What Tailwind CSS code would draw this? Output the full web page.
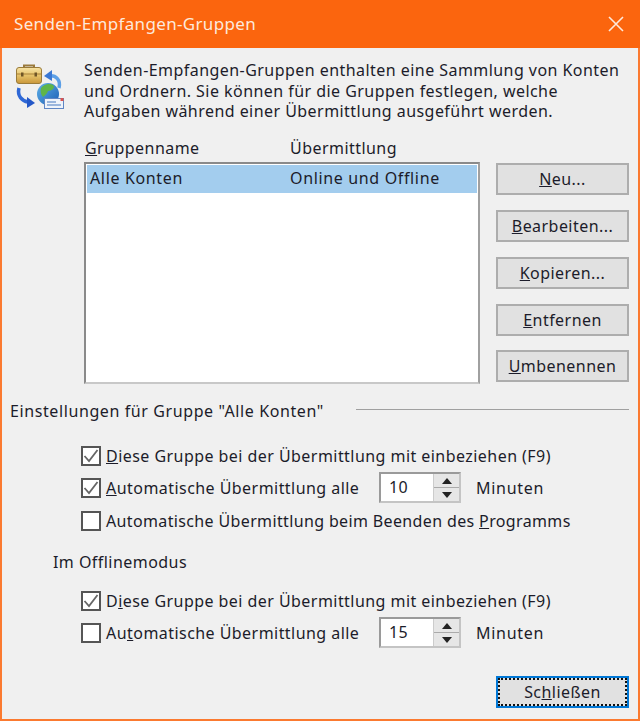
<!DOCTYPE html>
<html lang="de">
<head>
  <meta charset="UTF-8" />
  <script src="https://cdn.jsdelivr.net/npm/@tailwindcss/browser@4"></script>
  <title>Senden-Empfangen-Gruppen</title>
</head>
<body class="bg-[#f0f0f0] font-['Noto_Sans',sans-serif] text-[16px] leading-5 tracking-[0.45px] text-[#1c1c2a] overflow-hidden">
  <div class="w-[640px] h-[721px] flex flex-col border-x-2 border-b-2 border-[#fb7a30]">
    <!-- title bar -->
    <header class="h-12 -mx-0.5 shrink-0 bg-[#fb650e] flex items-center justify-between pl-[14px] pr-[16px] text-[#fde9dc] text-[17px] tracking-[0.33px]">
      <span>Senden-Empfangen-Gruppen</span>
      <svg class="w-4 h-4" viewBox="0 0 16 16" fill="none" stroke="#fde9dc" stroke-width="1.6"><path d="M1 1l14 14M15 1L1 15" /></svg>
    </header>

    <main class="flex-1 flex flex-col pl-[8px] pr-[9px]">
      <!-- intro -->
      <section class="flex mt-[12px] pl-[5px]">
        <svg class="w-[50px] h-[50px] mt-[1px] shrink-0" viewBox="0 0 50 50">
          <defs>
            <linearGradient id="gold" x1="0" y1="0" x2="0" y2="1">
              <stop offset="0" stop-color="#f6e3a6" />
              <stop offset="0.45" stop-color="#e8c66e" />
              <stop offset="1" stop-color="#c9963a" />
            </linearGradient>
            <linearGradient id="sea" x1="0" y1="0" x2="1" y2="1">
              <stop offset="0" stop-color="#5fb0e8" />
              <stop offset="1" stop-color="#1c5fb5" />
            </linearGradient>
          </defs>
          <!-- arrows -->
          <path d="M44 27c2-8-3-13-10-12" fill="none" stroke="#5c9fe6" stroke-width="3.500" />
          <path d="M29 15l8-6v11z" fill="#3a78d4" />
          <path d="M4 27c-2 8 3 13 9 14" fill="none" stroke="#2f68d6" stroke-width="3.500" />
          <path d="M20 42l-8-6v11z" fill="#2458c8" />
          <!-- briefcase -->
          <path d="M9 7V4.500h10V7" fill="none" stroke="#9a7a3c" stroke-width="2" />
          <rect x="1.500" y="6.500" width="25" height="16" rx="2.500" fill="url(#gold)" stroke="#9a7b3a" />
          <path d="M2 13h24" stroke="#a9823a" />
          <rect x="6" y="11.500" width="2.500" height="4" fill="#6e5526" />
          <rect x="19.500" y="11.500" width="2.500" height="4" fill="#6e5526" />
          <!-- globe -->
          <circle cx="33" cy="33" r="11" fill="url(#sea)" />
          <path d="M26 27c3-4 9-5 12-3 3 3-2 6-5 6-1 3-3 4-5 6-2-2-3-6-2-9z" fill="#5fb548" />
          <!-- envelope -->
          <rect x="29.500" y="37.500" width="19" height="10" fill="#eef3fa" stroke="#5f86c4" />
          <path d="M32 41h9M32 44h14" stroke="#7ea1d4" stroke-width="1.500" />
          <rect x="45.500" y="37" width="3" height="3" fill="#d9534f" />
        </svg>
        <p class="ml-[19px] leading-[20.5px] whitespace-nowrap">Senden-Empfangen-Gruppen enthalten eine Sammlung von Konten<br />und Ordnern. Sie können für die Gruppen festlegen, welche<br />Aufgaben während einer Übermittlung ausgeführt werden.</p>
      </section>

      <!-- list + buttons -->
      <section class="flex mt-[16px] pl-[74px]">
        <div class="w-[396px] shrink-0">
          <div class="flex h-5 pl-px">
            <span class="w-[205px]"><u>G</u>ruppenname</span>
            <span>Übermittlung</span>
          </div>
          <div class="h-[222px] mt-[4px] bg-white border-2 border-[#8a8a8a] border-r-[#a0a0a0] border-b-[#c8c8c8] p-px">
            <div class="h-7 bg-[#a3cdee] flex items-center pl-[3px] pb-px tracking-[0.65px]">
              <span class="w-[200px]">Alle Konten</span>
              <span>Online und Offline</span>
            </div>
          </div>
        </div>
        <div class="ml-4 mt-[25px] w-[133px] flex flex-col gap-[15px]">
          <button class="h-[32px] bg-[#e1e1e1] border-2 border-[#adadad]"><u>N</u>eu...</button>
          <button class="h-[32px] bg-[#e1e1e1] border-2 border-[#adadad]"><u>B</u>earbeiten...</button>
          <button class="h-[32px] bg-[#e1e1e1] border-2 border-[#adadad]"><u>K</u>opieren...</button>
          <button class="h-[32px] bg-[#e1e1e1] border-2 border-[#adadad]"><u>E</u>ntfernen</button>
          <button class="h-[32px] -mt-px bg-[#e1e1e1] border-2 border-[#adadad]"><u>U</u>mbenennen</button>
        </div>
      </section>

      <!-- group settings -->
      <section class="flex items-center mt-[17px] h-5">
        <span class="tracking-[0.6px]">Einstellungen für Gruppe "Alle Konten"</span>
        <div class="flex-1 h-px ml-[32px] mb-[2px] bg-[#a0a0a0]"></div>
      </section>

      <section class="flex flex-col mt-[25px] pl-[71px]">
        <label class="flex items-center h-5 gap-[5px]">
          <span class="w-5 h-5 bg-white border-2 border-[#555] flex items-center justify-center"><svg class="w-4 h-4" viewBox="0 0 16 16" fill="none" stroke="#666" stroke-width="1.800"><path d="M1.500 8l4.500 5L14.500 2" /></svg></span>
          <span><u>D</u>iese Gruppe bei der Übermittlung mit einbeziehen (F9)</span>
        </label>
        <label class="flex items-center h-5 gap-[5px] mt-[12px]">
          <span class="w-5 h-5 bg-white border-2 border-[#555] flex items-center justify-center"><svg class="w-4 h-4" viewBox="0 0 16 16" fill="none" stroke="#666" stroke-width="1.800"><path d="M1.500 8l4.500 5L14.500 2" /></svg></span>
          <span class="w-[268px] whitespace-nowrap"><u>A</u>utomatische Übermittlung alle</span>
          <div class="w-[82px] h-[31px] flex border-2 border-[#9a9a9a] border-r-[#c4c4c4] border-b-[#c4c4c4] bg-white">
            <span class="flex-1 pl-[8px] leading-[27px]">10</span>
            <div class="w-[26px] flex flex-col bg-[#e6e6e6] border-l border-[#ccc]">
              <span class="flex-1 flex items-center justify-center border-b border-[#aaa]"><svg class="w-3 h-2" viewBox="0 0 12 8"><path d="M6 1l5 6H1z" fill="#222" /></svg></span>
              <span class="flex-1 flex items-center justify-center"><svg class="w-3 h-2" viewBox="0 0 12 8"><path d="M6 7l5-6H1z" fill="#222" /></svg></span>
            </div>
          </div>
          <span class="ml-[10px] tracking-[0.7px]">Minuten</span>
        </label>
        <label class="flex items-center h-5 gap-[5px] mt-[13px]">
          <span class="w-5 h-5 bg-white border-2 border-[#555]"></span>
          <span class="tracking-[0.36px]">Automatische Übermittlung beim Beenden des <u>P</u>rogramms</span>
        </label>
      </section>

      <p class="mt-[21px] pl-[43px]">Im Offlinemodus</p>

      <section class="flex flex-col mt-[19px] pl-[71px]">
        <label class="flex items-center h-5 gap-[5px]">
          <span class="w-5 h-5 bg-white border-2 border-[#555] flex items-center justify-center"><svg class="w-4 h-4" viewBox="0 0 16 16" fill="none" stroke="#666" stroke-width="1.800"><path d="M1.500 8l4.500 5L14.500 2" /></svg></span>
          <span>D<u>i</u>ese Gruppe bei der Übermittlung mit einbeziehen (F9)</span>
        </label>
        <label class="flex items-center h-5 gap-[5px] mt-[12px]">
          <span class="w-5 h-5 bg-white border-2 border-[#555]"></span>
          <span class="w-[268px] whitespace-nowrap">Au<u>t</u>omatische Übermittlung alle</span>
          <div class="w-[82px] h-[31px] flex border-2 border-[#9a9a9a] border-r-[#c4c4c4] border-b-[#c4c4c4] bg-white">
            <span class="flex-1 pl-[8px] leading-[27px]">15</span>
            <div class="w-[26px] flex flex-col bg-[#e6e6e6] border-l border-[#ccc]">
              <span class="flex-1 flex items-center justify-center border-b border-[#aaa]"><svg class="w-3 h-2" viewBox="0 0 12 8"><path d="M6 1l5 6H1z" fill="#222" /></svg></span>
              <span class="flex-1 flex items-center justify-center"><svg class="w-3 h-2" viewBox="0 0 12 8"><path d="M6 7l5-6H1z" fill="#222" /></svg></span>
            </div>
          </div>
          <span class="ml-[10px] tracking-[0.7px]">Minuten</span>
        </label>
      </section>

      <div class="mt-auto mb-[11px] flex justify-end">
        <button class="w-[133px] h-[32px] bg-[#e1e1e1] border-2 border-[#0078d7] outline-2 outline-dotted outline-[#111] -outline-offset-4">Sc<u>h</u>ließen</button>
      </div>
    </main>
  </div>
</body>
</html>
